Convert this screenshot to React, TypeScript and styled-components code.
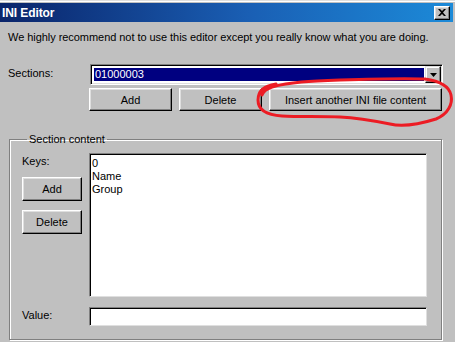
import React from "react";
import styled, { createGlobalStyle } from "styled-components";

const GlobalStyle = createGlobalStyle`
  html, body {
    margin: 0;
    padding: 0;
    background: #c0c0c0;
  }
  body {
    font-family: "Liberation Sans", Arial, sans-serif;
    font-size: 11px;
    color: #000;
  }
`;

const Window = styled.div`
  position: relative;
  width: 455px;
  height: 342px;
  box-sizing: border-box;
  padding: 3px 2px 0 0;
  background: #c0c0c0;
  box-shadow: inset 0 1px #dfdfdf, inset 0 2px #fff;
  overflow: hidden;
`;

const TitleBar = styled.div`
  display: flex;
  align-items: center;
  justify-content: space-between;
  height: 19px;
  padding: 0 3px 0 2px;
  background: linear-gradient(to right, #0a246a 0%, #1a5fb4 55%, #1c8ad8 100%);
`;

const TitleText = styled.span`
  color: #fff;
  font-weight: bold;
  font-size: 12px;
  letter-spacing: -0.1px;
`;

const CloseButton = styled.div`
  display: flex;
  align-items: center;
  justify-content: center;
  width: 14px;
  height: 12px;
  background: #c0c0c0;
  border: 1px solid;
  border-color: #fff #000 #000 #fff;
  box-shadow: inset -1px -1px #808080, inset 1px 1px #dfdfdf;
`;

const Body = styled.div`
  padding: 0 10px 0 8px;
`;

const Intro = styled.p`
  margin: 9px 0 0;
  line-height: 13px;
  white-space: nowrap;
  letter-spacing: -0.05px;
`;

const SectionsGrid = styled.div`
  display: grid;
  grid-template-columns: 82px 1fr;
  margin-top: 20px;
`;

const Label = styled.span<{ $top?: number }>`
  line-height: 13px;
  padding-top: ${(p) => p.$top ?? 0}px;
`;

const Combo = styled.div`
  display: flex;
  height: 21px;
  box-sizing: border-box;
  padding: 1px;
  background: #fff;
  border: 1px solid;
  border-color: #808080 #fff #fff #808080;
  box-shadow: inset 1px 1px #000, inset -1px -1px #dfdfdf;
`;

const ComboValue = styled.div`
  flex: 1;
  margin: 2px 1px 2px 2px;
  padding-left: 1px;
  background: #000080;
  color: #fff;
  line-height: 13px;
`;

const DropButton = styled.div`
  display: flex;
  align-items: center;
  justify-content: center;
  width: 14px;
  background: #c0c0c0;
  border: 1px solid;
  border-color: #dfdfdf #000 #000 #dfdfdf;
  box-shadow: inset -1px -1px #808080, inset 1px 1px #fff;
`;

const ButtonRow = styled.div`
  grid-column: 2;
  display: flex;
  gap: 7px;
  margin-top: 3px;
  margin-left: -1px;
`;

const Button = styled.div<{ $w: number; $h?: number }>`
  display: flex;
  align-items: center;
  justify-content: center;
  width: ${(p) => p.$w}px;
  height: ${(p) => p.$h ?? 23}px;
  box-sizing: border-box;
  background: #c0c0c0;
  border: 1px solid;
  border-color: #fff #000 #000 #fff;
  box-shadow: inset -1px -1px #808080, inset 1px 1px #dfdfdf;
  font-size: 11px;
  white-space: nowrap;
`;

const GroupBox = styled.fieldset`
  margin: 22px 1px 0 1px;
  padding: 7px 14px 13px 12px;
  border: 1px solid #808080;
  box-shadow: inset 1px 1px #fff, 1px 1px #fff;
  min-width: 0;
`;

const Legend = styled.legend`
  margin-left: 5px;
  padding: 0 2px;
  line-height: 13px;
`;

const ContentGrid = styled.div`
  display: grid;
  grid-template-columns: 67px 1fr;
  row-gap: 10px;
`;

const LeftColumn = styled.div`
  display: flex;
  flex-direction: column;
  align-items: flex-start;
  gap: 9px;
  padding-top: 2px;
`;

const Field = styled.div<{ $h: number }>`
  height: ${(p) => p.$h}px;
  box-sizing: border-box;
  background: #fff;
  border: 1px solid;
  border-color: #808080 #dfdfdf #dfdfdf #808080;
  box-shadow: inset 1px 1px #000;
  padding: 3px 2px 0;
`;

const ListItem = styled.div`
  line-height: 13px;
`;

const Annotation = styled.svg`
  position: absolute;
  left: 0;
  top: 0;
  pointer-events: none;
`;

const keys = ["0", "Name", "Group"];

export default function App() {
  return (
    <>
      <GlobalStyle />
      <Window>
        <TitleBar>
          <TitleText>INI Editor</TitleText>
          <CloseButton>
            <svg width="8" height="7" viewBox="0 0 8 7">
              <path d="M0 0h2l2 2 2-2h2L5 3.5 8 7H6L4 5 2 7H0l3-3.5z" fill="#000" />
            </svg>
          </CloseButton>
        </TitleBar>
        <Body>
          <Intro>
            We highly recommend not to use this editor except you really know what you are doing.
          </Intro>
          <SectionsGrid>
            <Label $top={3}>Sections:</Label>
            <Combo>
              <ComboValue>01000003</ComboValue>
              <DropButton>
                <svg width="7" height="4" viewBox="0 0 7 4">
                  <path d="M0 0h7L3.5 4z" fill="#000" />
                </svg>
              </DropButton>
            </Combo>
            <ButtonRow>
              <Button $w={83}>Add</Button>
              <Button $w={83}>Delete</Button>
              <Button $w={173}>Insert another INI file content</Button>
            </ButtonRow>
          </SectionsGrid>
          <GroupBox>
            <Legend>Section content</Legend>
            <ContentGrid>
              <LeftColumn>
                <Label>Keys:</Label>
                <Button $w={60} $h={24}>Add</Button>
                <Button $w={60} $h={24}>Delete</Button>
              </LeftColumn>
              <Field $h={144}>
                {keys.map((k) => (
                  <ListItem key={k}>{k}</ListItem>
                ))}
              </Field>
              <Label $top={2}>Value:</Label>
              <Field $h={19} />
            </ContentGrid>
          </GroupBox>
        </Body>
        <Annotation width="455" height="342" viewBox="0 0 455 342">
          <path
            d="M276 84 C 262 86, 258 92, 258 100 C 258 110, 266 115, 282 116 C 300 117, 320 116, 340 117 C 360 118, 375 121, 390 124 C 402 127, 420 124, 436 119 C 448 114, 453 104, 451 95 C 449 86, 440 81, 425 79 C 400 78, 370 79, 340 80 C 310 81, 290 82, 272 87 C 266 89, 263 92, 262 95"
            fill="none"
            stroke="#ec1c24"
            strokeWidth="3"
            strokeLinecap="round"
          />
        </Annotation>
      </Window>
    </>
  );
}
